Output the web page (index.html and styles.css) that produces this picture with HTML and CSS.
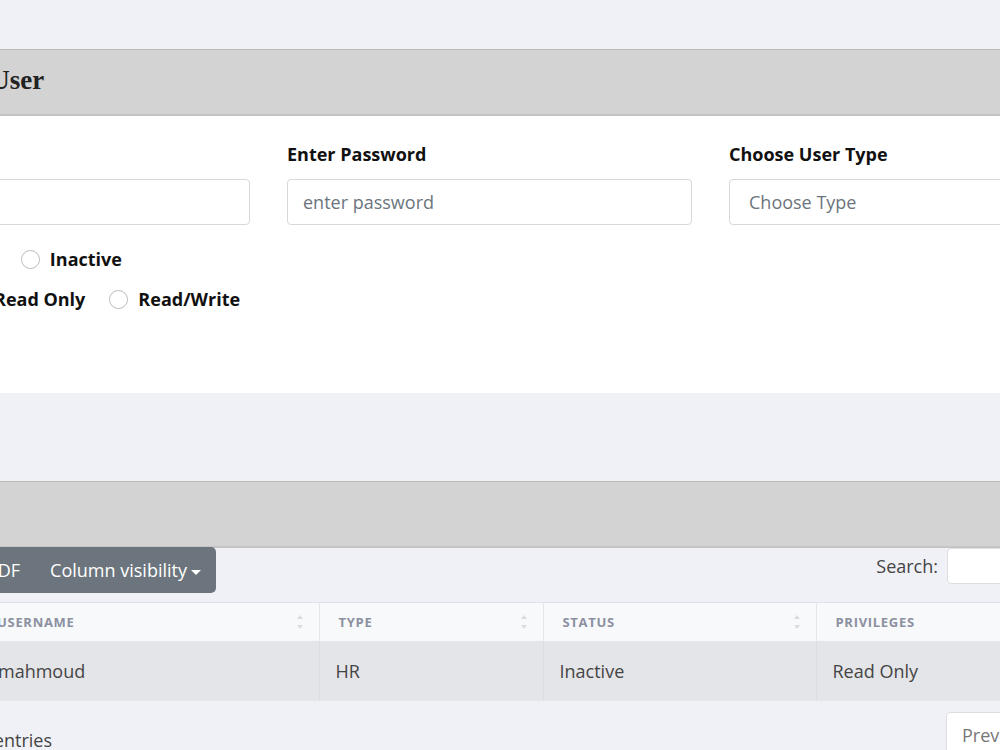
FILE: index.html
```html
<!DOCTYPE html>
<html lang="en">
<head>
    <meta charset="UTF-8">
    <meta name="viewport" content="width=device-width, initial-scale=1.0">
    <title>Users</title>
    <link rel="stylesheet" href="styles.css">
</head>
<body>
<div class="page">
    <div class="card">
        <div class="card-header">
            <h2>Add User</h2>
        </div>
        <form class="card-body user-form">
            <div class="form-row">
                <div class="field">
                    <label for="username">Enter Username</label>
                    <input type="text" id="username" placeholder="enter username">
                </div>
                <div class="field">
                    <label for="password">Enter Password</label>
                    <input type="password" id="password" placeholder="enter password">
                </div>
                <div class="field">
                    <label for="type">Choose User Type</label>
                    <select id="type">
                        <option>Choose Type</option>
                    </select>
                </div>
            </div>
            <div class="radio-row status-row">
                <span class="radio-title">Status:</span>
                <label class="radio"><span class="dot"></span>Active</label>
                <label class="radio"><span class="dot"></span>Inactive</label>
            </div>
            <div class="radio-row priv-row">
                <span class="radio-title">Privileges:</span>
                <label class="radio"><span class="dot"></span>Read Only</label>
                <label class="radio"><span class="dot"></span>Read/Write</label>
            </div>
        </form>
    </div>

    <div class="card users-card">
        <div class="card-header">
            <h2>Users</h2>
        </div>
        <div class="card-body table-body">
            <div class="toolbar">
                <div class="btn-group">
                    <button>Copy</button>
                    <button>Excel</button>
                    <button>PDF</button>
                    <button>Column visibility<span class="caret"></span></button>
                </div>
                <div class="search">
                    <label for="search">Search:</label>
                    <input type="search" id="search">
                </div>
            </div>
            <table class="users-table">
                <thead>
                    <tr>
                        <th class="col-user">Username<span class="sort"></span></th>
                        <th class="col-type">Type<span class="sort"></span></th>
                        <th class="col-status">Status<span class="sort"></span></th>
                        <th class="col-priv">Privileges<span class="sort"></span></th>
                    </tr>
                </thead>
                <tbody>
                    <tr>
                        <td>mahmoud</td>
                        <td>HR</td>
                        <td>Inactive</td>
                        <td>Read Only</td>
                    </tr>
                </tbody>
            </table>
            <div class="table-footer">
                <div class="info"><span>Showing 1 to 1 of 1 entries</span></div>
                <div class="pager">
                    <button>Previous</button>
                    <button class="current">1</button>
                    <button>Next</button>
                </div>
            </div>
        </div>
    </div>
</div>
</body>
</html>
```

FILE: styles.css
```css
body {
    margin: 0;
    background-color: #f0f1f6;
    font-family: "Open Sans", "Noto Sans", sans-serif;
    color: #212529;
    overflow: hidden;
}
.page {
    width: 1500px;
    margin-left: -175px;
    padding-top: 49px;
}
.card {
    background-color: #fff;
}
.card-header {
    background-color: #d3d3d3;
    border-top: 1px solid #bcbcbc;
    border-bottom: 2px solid #c4c4c4;
    box-sizing: border-box;
    height: 67px;
    display: flex;
    align-items: center;
    padding-left: 109px;
    padding-bottom: 3px;
}
.card-header h2 {
    margin: 0;
    font-family: "Liberation Serif", serif;
    font-size: 27px;
    font-weight: bold;
    color: #222;
}
.card-body {
    padding: 0 20px;
}
.user-form {
    height: 277px;
    padding-top: 26px;
    box-sizing: border-box;
}
.form-row {
    display: grid;
    grid-template-columns: repeat(3, 405px);
    column-gap: 37px;
}
.field label {
    display: block;
    font-weight: bold;
    font-size: 18px;
    margin-bottom: 13px;
    color: #111;
}
.field input,
.field select {
    width: 100%;
    box-sizing: border-box;
    height: 46px;
    border: 1px solid #d6d8db;
    border-radius: 4px;
    padding: 0 15px;
    font-family: inherit;
    font-size: 18px;
    color: #6c757d;
    background: #fff;
    appearance: none;
}
.field select {
    padding-left: 19px;
}
.field input::placeholder {
    color: #6c757d;
}
.radio-row {
    display: flex;
    align-items: center;
    font-weight: bold;
    font-size: 18px;
    color: #111;
    height: 40px;
}
.status-row {
    margin-top: 14px;
}
.radio {
    display: flex;
    align-items: center;
    gap: 10px;
    margin-right: 24px;
}
.dot {
    width: 17px;
    height: 17px;
    border: 1px solid #b9bcc0;
    border-radius: 50%;
    background: #fff;
}
.status-row .radio-title {
    width: 67px;
}
.priv-row .radio-title {
    width: 120px;
}
.users-card {
    margin-top: 88px;
}
.users-card .card-header h2 {
    visibility: hidden;
}
.table-body {
    background-color: #f0f1f6;
    padding-left: 153px;
}
.toolbar {
    display: flex;
    justify-content: space-between;
    align-items: flex-start;
    width: 1200px;
}
.btn-group {
    display: flex;
    background-color: #6c757d;
    border-radius: 5px;
    height: 46px;
    margin-left: -151px;
    margin-top: -1px;
}
.btn-group button {
    background: none;
    border: none;
    color: #fff;
    font-family: inherit;
    font-size: 18px;
    padding: 0 15px;
    height: 46px;
}
.caret {
    display: inline-block;
    width: 0;
    height: 0;
    border-left: 5px solid transparent;
    border-right: 5px solid transparent;
    border-top: 5px solid #fff;
    vertical-align: middle;
    margin-left: 4px;
}
.search {
    display: flex;
    align-items: center;
    gap: 9px;
    font-size: 18px;
    color: #444;
    margin-top: 0;
    margin-right: -19px;
}
.search input {
    width: 250px;
    height: 36px;
    box-sizing: border-box;
    border: 1px solid #dcdee2;
    border-radius: 4px;
    background: #fff;
}
.users-table {
    border-collapse: collapse;
    margin-top: 9px;
    width: 1330px;
    border-top: 1px solid #dfe1e6;
}
.users-table th {
    background-color: #f8f9fb;
    height: 38px;
    padding: 0 19px;
    text-align: left;
    font-size: 13px;
    font-weight: bold;
    letter-spacing: 0.7px;
    text-transform: uppercase;
    color: #8b90a0;
    border-right: 1px solid #e4e6ea;
    position: relative;
}
.sort {
    position: absolute;
    right: 16px;
    top: 12px;
    width: 6px;
    height: 14px;
}
.sort::before,
.sort::after {
    content: "";
    position: absolute;
    left: 0;
    border-left: 3px solid transparent;
    border-right: 3px solid transparent;
}
.sort::before {
    top: 0;
    border-bottom: 4px solid #dadce0;
}
.sort::after {
    bottom: 0;
    border-top: 4px solid #dadce0;
}
.col-user { width: 341px; box-sizing: border-box; }
.col-type { width: 224px; box-sizing: border-box; }
.col-status { width: 273px; box-sizing: border-box; }
.users-table td {
    background-color: #e4e5e9;
    height: 60px;
    padding: 0 16px;
    font-size: 18px;
    color: #444;
    border-right: 1px solid #dcdde2;
}
.users-table td:first-child {
    padding-left: 20px;
}
.table-footer {
    display: flex;
    align-items: flex-start;
    padding-top: 11px;
    font-size: 18px;
    color: #444;
}
.info {
    display: flex;
    justify-content: flex-end;
    flex: 0 0 969px;
    min-width: 0;
    box-sizing: border-box;
    padding-right: 895px;
    margin-top: 16px;
    white-space: nowrap;
}
.info span {
    flex-shrink: 0;
}
.pager {
    display: flex;
    white-space: nowrap;
}
.pager button {
    background: #fff;
    border: 1px solid #dcdee2;
    margin-left: -1px;
    height: 46px;
    padding: 0 15px;
    font-family: inherit;
    font-size: 18px;
    color: #777;
}
.pager button:first-child {
    border-radius: 4px 0 0 4px;
}
```
